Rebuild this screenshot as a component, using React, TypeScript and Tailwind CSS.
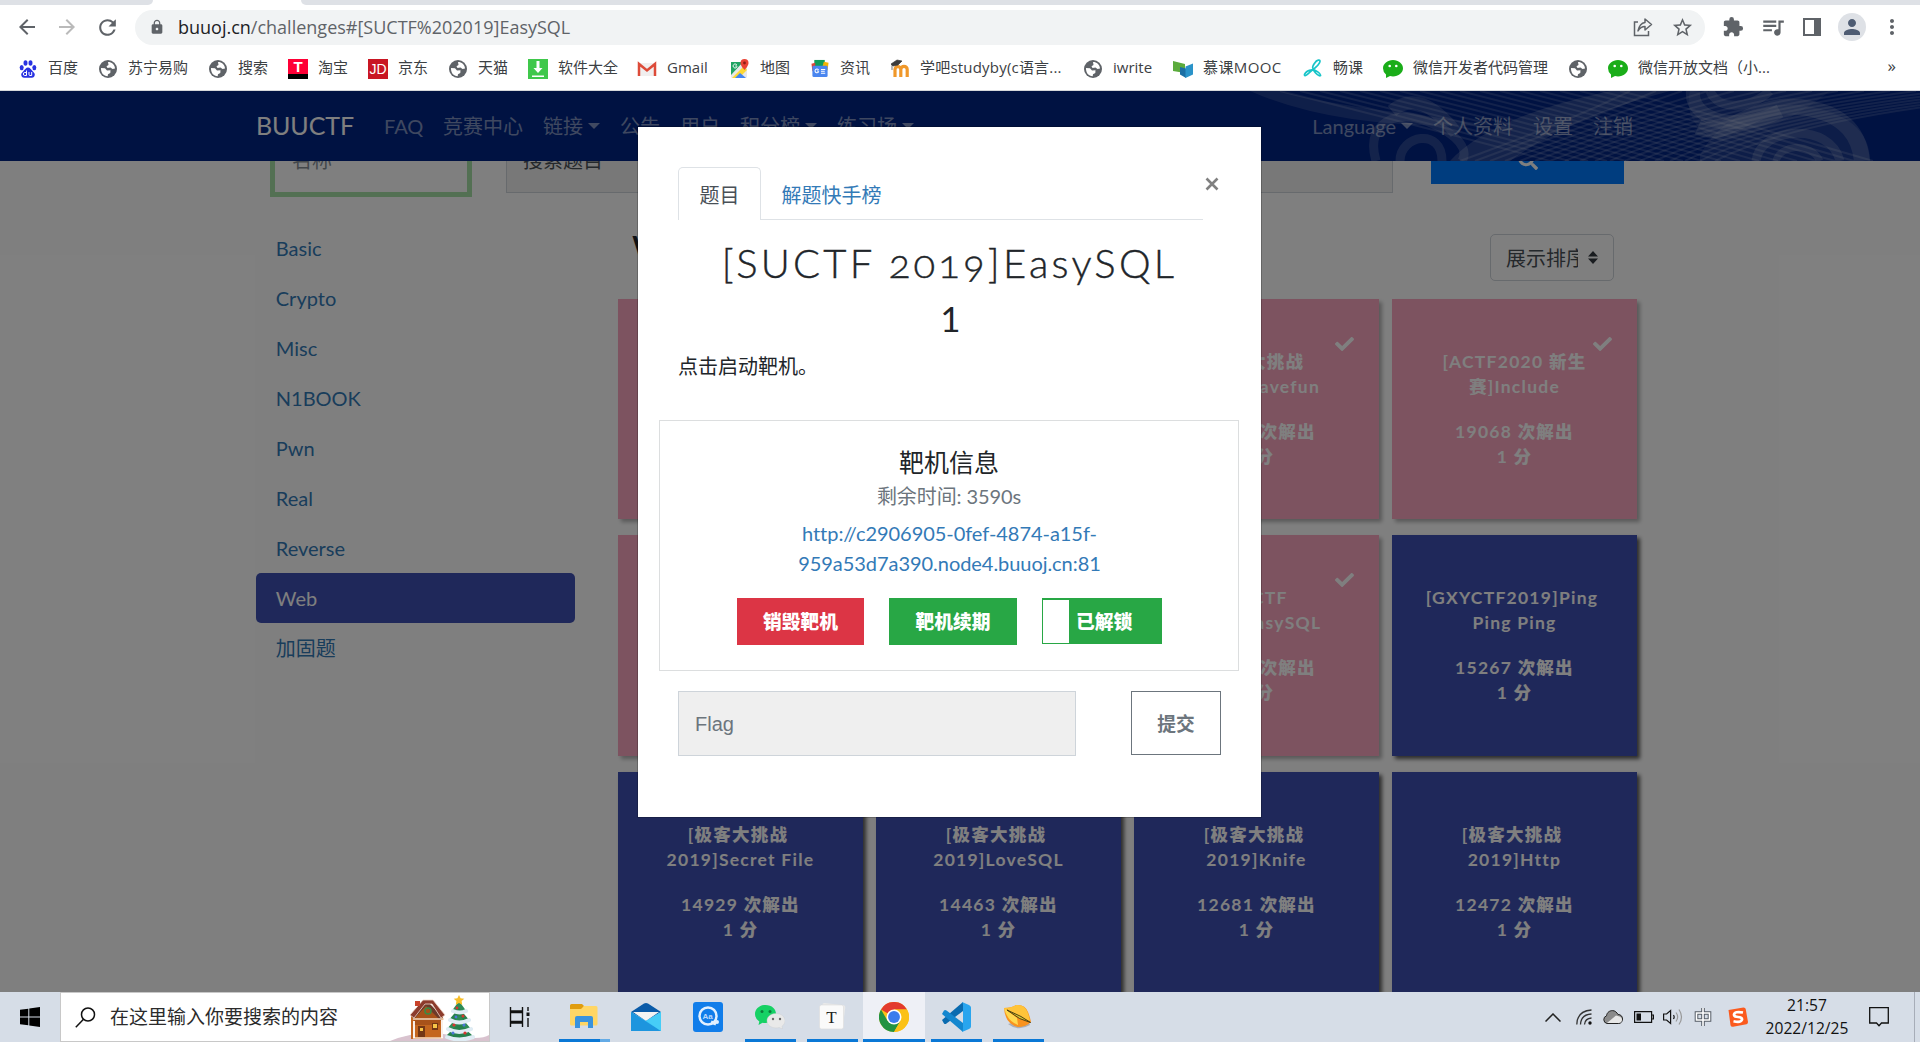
import React from "react";
import { FaCheck, FaSearch } from "react-icons/fa";
import {
  MdArrowBack,
  MdArrowForward,
  MdRefresh,
  MdStarOutline,
  MdPerson,
  MdMoreVert,
  MdQueueMusic,
  MdExtension,
  MdLock,
} from "react-icons/md";

const CJK = "font-[Lato,'Noto_Sans_CJK_SC',sans-serif]";
const UI = "font-['Open_Sans','Noto_Sans_CJK_SC',sans-serif]";

/* ---------- bookmark icons ---------- */

function Globe() {
  return (
    <svg viewBox="0 0 18 18" className="h-[18px] w-[18px]">
      <circle cx="9" cy="9" r="9" fill="#5f6368" />
      <path d="M2 8 6 8.200 8 10.500 11.500 10.300 11.300 13 9 14.200 8.700 16.300C4.500 16 1.800 13 2 8Z" fill="#fff" />
      <path d="M9 2.100C12.500 2 15.800 4.500 16 8.500L13.500 9 11.500 7.500 8.500 8 7.500 6.200 9.500 5Z" fill="#fff" />
    </svg>
  );
}

function Baidu() {
  return (
    <svg viewBox="0 0 18 18" className="h-[18px] w-[18px]" fill="#2932e1">
      <ellipse cx="2.700" cy="7.600" rx="2" ry="2.700" />
      <ellipse cx="6.500" cy="3" rx="2" ry="2.800" />
      <ellipse cx="11.500" cy="3" rx="2" ry="2.800" />
      <ellipse cx="15.300" cy="7.600" rx="2" ry="2.700" />
      <path d="M9 7.500c2 0 3 2 4.500 3.500S16.500 14 15.500 16s-3 2-6.500 1.700C5.500 18 3.500 18 2.500 16s.5-3.500 2-5S7 7.500 9 7.500Z" />
      <path d="M7.500 10.500v5H5.800a1.500 1.500 0 0 1 0-3h1.700M10 12v2.500q0 1 1 1h1.700V12" fill="none" stroke="#fff" strokeWidth="1" />
    </svg>
  );
}

function Download() {
  return (
    <svg viewBox="0 0 20 20" className="h-5 w-5">
      <rect width="20" height="20" fill="#3fc84b" />
      <path d="M8.500 2h3v7h3L10 14 5.500 9h3ZM4 16.500h12v1.500H4Z" fill="#fff" />
    </svg>
  );
}

function Gmail() {
  return (
    <svg viewBox="0 0 20 16" className="h-4 w-5">
      <path d="M1 2h18v13H1Z" fill="#f1efef" />
      <path d="M2 15V3l8 6.500L18 3v12" fill="none" stroke="#dd4b39" strokeWidth="2.500" />
    </svg>
  );
}

function MapsIcon() {
  return (
    <svg viewBox="0 0 20 20" className="h-5 w-5">
      <rect x="1" y="3" width="16" height="16" rx="1.500" fill="#e8e8e8" />
      <path d="M1 3h12L1 16Z" fill="#1fa463" />
      <path d="M2 19 14 7l3 4-8 8Z" fill="#fdd835" />
      <path d="m5 19 5-5 6 5Z" fill="#4285f4" />
      <path d="M14.500 0a4 4 0 0 1 4 4c0 3-4 7-4 7s-4-4-4-7a4 4 0 0 1 4-4Z" fill="#e94335" />
      <circle cx="14.500" cy="4" r="1.400" fill="#8c1d16" />
      <path d="M7 7H5.300M6.900 6a2 2 0 1 0 .2 1.500" stroke="#fff" fill="none" />
    </svg>
  );
}

function News() {
  return (
    <svg viewBox="0 0 20 20" className="h-[19px] w-5">
      <path d="M4 1h11v8H4Z" fill="#0f9d58" />
      <path d="m14 3 5 1-1 8-6-2Z" fill="#f4b400" />
      <path d="m1 5 4-1v9H2Z" fill="#db4437" />
      <rect x="2" y="7" width="16" height="12" rx="1.500" fill="#4a86f0" />
      <path d="M8.500 12.700H6.800M8.500 11.500a2 2 0 1 0 .2 1.500M11 11h4.500M11 13h4M11 15h4.500" stroke="#fff" strokeWidth="1.100" fill="none" />
    </svg>
  );
}

function Moodle() {
  return (
    <svg viewBox="0 0 20 20" className="h-5 w-5">
      <path d="M5 18V10.500a2.800 2.800 0 0 1 5.800 0V18M10.800 18v-7.500a3 3 0 0 1 6.400 0V18" fill="none" stroke="#f0982a" strokeWidth="3.200" />
      <path d="m1 5 6-4 5 1-4 4-5 1Zm1 0v6" fill="#3b3b3b" stroke="#3b3b3b" strokeWidth=".7" />
    </svg>
  );
}

function Mooc() {
  return (
    <svg viewBox="0 0 20 18" className="h-[18px] w-5">
      <path d="m0 1 12 3v9L0 11Z" fill="#5bab3c" />
      <path d="m7 7 6 1.500V18l-6-3.500Z" fill="#1b6fa4" />
      <path d="m12.500 6.500 7.500-3v11l-7.500 3.500Z" fill="#2a93c9" />
    </svg>
  );
}

function Changke() {
  return (
    <svg viewBox="0 0 20 20" className="h-[19px] w-5" fill="none" stroke="#18c5c9" strokeWidth="1.800" strokeLinejoin="round">
      <path d="M10 10C8.500 8 13 1.500 15.500 1.200S18 3 15.500 6 8 12.500 5 15.500s-4.500 2-3.800.5S5 12 9 11.500s9 4 9 5.500-3 .5-5.500-2.500S10.500 11 10 10Z" />
    </svg>
  );
}

function WeChatGreen() {
  return (
    <svg viewBox="0 0 20 18" className="h-[18px] w-5">
      <path d="M10 0c5.500 0 10 3.700 10 8.300s-4.500 8.200-10 8.200a12 12 0 0 1-3-.4L3 18v-3.500A8 8 0 0 1 0 8.300C0 3.700 4.500 0 10 0Z" fill="#1aad19" />
      <circle cx="6.700" cy="6" r="1.300" fill="#fff" />
      <circle cx="13.300" cy="6" r="1.300" fill="#fff" />
    </svg>
  );
}

const bookmarks: { icon: React.ReactNode; label: string; w: string; t?: string }[] = [
  { icon: <Baidu />, label: "百度", w: "w-[80px]" },
  { icon: <Globe />, label: "苏宁易购", w: "w-[110px]" },
  { icon: <Globe />, label: "搜索", w: "w-[80px]" },
  {
    icon: (
      <div className="flex h-5 w-5 flex-col items-center bg-[#ff0036] font-['Liberation_Sans',sans-serif] text-[15px] leading-[15px] font-bold text-white">
        <span className="h-[15px]">T</span>
        <span className="h-[5px] w-5 bg-black" />
      </div>
    ),
    label: "淘宝",
    w: "w-[80px]",
  },
  {
    icon: (
      <div className="flex h-5 w-5 items-center justify-center bg-[#c91623] font-['Liberation_Sans',sans-serif] text-[14px] leading-none text-white">
        JD
      </div>
    ),
    label: "京东",
    w: "w-[80px]",
  },
  { icon: <Globe />, label: "天猫", w: "w-[80px]" },
  { icon: <Download />, label: "软件大全", w: "w-[109px]" },
  { icon: <Gmail />, label: "Gmail", w: "w-[93px]" },
  { icon: <MapsIcon />, label: "地图", w: "w-[80px]" },
  { icon: <News />, label: "资讯", w: "w-[80px]" },
  { icon: <Moodle />, label: "学吧studyby(c语言...", w: "w-[193px]", t: "tracking-[0.2px]" },
  { icon: <Globe />, label: "iwrite", w: "w-[90px]" },
  { icon: <Mooc />, label: "慕课MOOC", w: "w-[130px]", t: "tracking-[0.4px]" },
  { icon: <Changke />, label: "畅课", w: "w-[80px]" },
  { icon: <WeChatGreen />, label: "微信开发者代码管理", w: "w-[185px]" },
  { icon: <Globe />, label: "", w: "w-[40px]" },
  { icon: <WeChatGreen />, label: "微信开放文档（小...", w: "w-[200px]" },
];

function Browser() {
  return (
    <div className={`flex h-[91px] shrink-0 flex-col border-b border-[#d5d7da] bg-white ${UI}`}>
      <div className="flex h-[5px] justify-between">
        <div className="w-[153px] rounded-br-[5px] bg-[#dee1e6]" />
        <div className="w-[1619px] rounded-bl-[5px] bg-[#dee1e6]" />
      </div>
      <div className="flex h-[44px] items-center text-[#5f6368]">
        <div className="flex w-[135px] items-center pl-[15px]">
          <MdArrowBack className="h-6 w-6" />
          <MdArrowForward className="ml-[16px] h-6 w-6 text-[#bababa]" />
          <MdRefresh className="ml-[16px] h-[25px] w-[25px]" />
        </div>
        <div className="flex h-[35px] w-[1570px] items-center rounded-full bg-[#f1f3f4] pr-[11px] pl-[14px]">
          <MdLock className="h-4 w-4" />
          <span className="ml-[13px] text-[18px] leading-none whitespace-nowrap">
            <span className="text-[#202124]">buuoj.cn</span>/challenges#[SUCTF%202019]EasySQL
          </span>
          <svg viewBox="0 0 20 20" className="ml-auto h-5 w-5" fill="none" stroke="#5f6368" strokeWidth="1.500">
            <path d="M5 5H1.500v13.500h14V14" />
            <path d="M12 2v3.500C8 6 6 9 5 14c2-3.500 4-4.500 7-4.500V13l6.500-5.500Z" strokeLinejoin="round" />
          </svg>
          <MdStarOutline className="ml-[18px] h-[23px] w-[23px]" />
        </div>
        <MdExtension className="ml-[17px] h-[22px] w-[22px]" />
        <MdQueueMusic className="ml-[16px] h-[26px] w-[26px]" />
        <svg viewBox="0 0 18 18" className="ml-[17px] h-[18px] w-[18px]">
          <path d="M1 1h16v16H1Z" fill="none" stroke="#5f6368" strokeWidth="2" />
          <path d="M11 1h6v16h-6Z" fill="#5f6368" />
        </svg>
        <div className="ml-[17px] flex h-7 w-7 items-center justify-center rounded-full bg-[#dee1e6] text-[#4e5c73]">
          <MdPerson className="h-6 w-6" />
        </div>
        <MdMoreVert className="ml-[14px] h-6 w-6" />
      </div>
      <div className="flex h-[40px] items-center pb-[1px] pl-[18px] text-[15px] leading-none text-[#3c4043]">
        {bookmarks.map((b, i) => (
          <div key={i} className={`flex shrink-0 items-center gap-[10px] ${b.w}`}>
            <span className="flex w-5 shrink-0 justify-center">{b.icon}</span>
            <span className={`pb-[2px] whitespace-nowrap ${b.t ?? ""}`}>{b.label}</span>
          </div>
        ))}
        <span className="ml-auto pr-[24px] pb-[6px] text-[17px]">»</span>
      </div>
    </div>
  );
}

/* ---------- site ---------- */

function Caret() {
  return <span className="ml-[5px] h-0 w-0 border-x-[6px] border-t-[6px] border-x-transparent border-t-current" />;
}

function NavArt() {
  const fan = Array.from({ length: 18 }, (_, i) => i);
  return (
    <svg viewBox="0 0 700 70" className="absolute top-0 right-0 h-[70px] w-[700px]" fill="none" stroke="#fff">
      <g strokeOpacity=".15" strokeWidth="2">
        {fan.map((i) => (
          <path key={i} d={`M${60 + i * 20} 0Q${220 + i * 16} ${40 - i} ${330 + i * 19} 70`} />
        ))}
        {fan.map((i) => (
          <path key={i} d={`M${240 + i * 15} 70Q${350 + i * 14} ${30 - i * 0.5} ${410 + i * 26} 0`} />
        ))}
      </g>
      <path d="M30 0Q120 40 270 34L200 24Q110 14 60 0Z" fill="#fff" fillOpacity=".12" stroke="none" />
      <path d="M230 70Q270 26 390 0H450Q350 26 290 70Z" fill="#fff" fillOpacity=".16" stroke="none" />
      <path d="M470 0H610Q560 40 500 50Q462 34 470 0Z" fill="#fff" fillOpacity=".08" stroke="none" />
      <path d="M480 64Q510 10 580 14Q650 24 650 70H480Z" fill="#fff" fillOpacity=".1" stroke="none" />
      <g strokeOpacity=".16" strokeWidth="9">
        <path d="M156 70C146 36 170 24 190 26S254 50 242 70" />
        <path d="M180 70C180 44 222 36 222 70" />
        <path d="M172 20Q200 -4 236 42" strokeWidth="13" />
        <path d="M473 0C470 30 520 42 560 20" strokeWidth="14" />
        <path d="M490 0C498 20 530 18 550 0" />
        <path d="M478 36C510 50 530 10 580 16S640 50 642 70" strokeWidth="16" />
        <path d="M536 70C540 36 610 30 620 70" />
        <path d="M556 70C560 54 590 50 600 70" strokeWidth="7" />
      </g>
    </svg>
  );
}

function Nav() {
  return (
    <nav className="relative flex h-[70px] shrink-0 bg-[#002484] pl-[256px] text-[20px] text-white/50">
      <NavArt />
      <div className="relative flex h-full w-[1377px] items-center justify-between">
        <div className="flex items-center gap-5">
          <span className="mr-[10px] w-[98px] text-[25px] tracking-[-0.1px] text-white">BUUCTF</span>
          <span className="w-[39px]">FAQ</span>
          <span>竞赛中心</span>
          <span className="flex items-center">链接<Caret /></span>
          <span>公告</span>
          <span>用户</span>
          <span className="flex items-center">积分榜<Caret /></span>
          <span className="flex items-center">练习场<Caret /></span>
        </div>
        <div className="flex items-center gap-5">
          <span className="flex items-center">Language<Caret /></span>
          <span>个人资料</span>
          <span>设置</span>
          <span>注销</span>
        </div>
      </div>
    </nav>
  );
}

type Chal = { title: string[]; count: string; solved?: boolean };
const cards: Chal[] = [
  { title: [], count: "", solved: true },
  { title: [], count: "", solved: true },
  { title: ["[极客大挑战", "2019]Havefun"], count: "20000", solved: true },
  { title: ["[ACTF2020 新生", "赛]Include"], count: "19068", solved: true },
  { title: [], count: "", solved: true },
  { title: [], count: "", solved: true },
  { title: ["[SUCTF", "2019]EasySQL"], count: "16000", solved: true },
  { title: ["[GXYCTF2019]Ping", "Ping Ping"], count: "15267" },
  { title: ["[极客大挑战", "2019]Secret File"], count: "14929" },
  { title: ["[极客大挑战", "2019]LoveSQL"], count: "14463" },
  { title: ["[极客大挑战", "2019]Knife"], count: "12681" },
  { title: ["[极客大挑战", "2019]Http"], count: "12472" },
];

/* Draws Han characters one weight heavier than the Latin letters around them. */
function Mixed({ text }: { text: string }) {
  return (
    <>
      {text.split(/([\u4e00-\u9fff]+)/).map((part, i) =>
        i % 2 ? (
          <span key={i} className="font-black">{part}</span>
        ) : (
          part
        ),
      )}
    </>
  );
}

function Card({ c }: { c: Chal }) {
  return (
    <div
      className={`relative flex h-[220.5px] flex-col items-center pt-[50px] text-[17.5px] leading-[25px] font-bold tracking-[1.25px] text-white ${
        c.solved ? "bg-[#faa6c0] shadow-[3px_3px_4px_rgba(0,0,0,0.3)]" : "bg-[#3f51b4] shadow-[3px_3px_4px_rgba(0,0,0,0.65)]"
      }`}
    >
      {c.title.map((t, i) => (
        <span key={t} className={`h-[25px] whitespace-pre ${i === 0 && !t.includes(" ") ? "pr-[5px]" : ""}`}>
          <Mixed text={t} />
        </span>
      ))}
      {c.count && (
        <>
          <span className="mt-5 h-[25px] whitespace-pre"><Mixed text={`${c.count} 次解出`} /></span>
          <span className="h-[25px] whitespace-pre"><Mixed text="1 分" /></span>
        </>
      )}
      {c.solved && c.count && <FaCheck className="absolute top-[35px] right-[25px] h-[20px] w-[19px]" />}
    </div>
  );
}

const categories = ["Basic", "Crypto", "Misc", "N1BOOK", "Pwn", "Real", "Reverse", "Web", "加固题"];

function Site() {
  return (
    <div className="flex flex-col bg-white">
      <Nav />
      <div className="flex h-[62px] items-start pl-[270px] text-[20px] leading-none">
        <div className="flex h-[36px] w-[202px] border-[5px] border-t-0 border-[#a6e0a6] pl-[17px] text-[#868e96] [clip-path:inset(0)]">
          <span className="-mt-[11px]">名称</span>
        </div>
        <div className="ml-[34px] flex h-[32px] w-[887px] border border-t-0 border-[#ced4da] bg-[#f0f0f0] pl-[16px] text-[#495057] [clip-path:inset(0)]">
          <span className="-mt-[11px]">搜索题目</span>
        </div>
        <div className="ml-[38px] flex h-[23px] w-[193px] justify-center overflow-hidden bg-[#007bff] text-white">
          <FaSearch className="-mt-[11px] h-[20px] w-[20px] shrink-0" />
        </div>
      </div>
      <div className="flex pl-[256px]">
        <div className="flex w-[319px] flex-col text-[20px]">
          {categories.map((c) => (
            <div
              key={c}
              className={`flex h-[50px] items-center rounded-[5px] pl-[19.8px] ${
                c === "Web" ? "bg-[#3f51b4] text-white" : "text-[#337ab7]"
              }`}
            >
              {c}
            </div>
          ))}
        </div>
        <div className="ml-[43px] w-[1019px]">
          <div className="flex h-[75.6px] justify-between pt-[11px]">
            <h3 className="-mt-[4px] pl-[14px] text-[35px] leading-none font-medium text-[#212529]">Web</h3>
            <div className="mr-[23px] flex h-[47px] w-[124px] items-center rounded-[5px] border border-[#ced4da] pt-px pl-[15px] text-[20px] text-[#495057]">
              <span className="w-[72px] overflow-hidden whitespace-nowrap">展示排序</span>
              <svg viewBox="0 0 10 13" className="mb-px ml-[10px] h-[13px] w-[10px]" fill="#343a40">
                <path d="M5 0 10 5.500H0ZM5 13 0 7.500h10Z" />
              </svg>
            </div>
          </div>
          <div className="grid grid-cols-4 gap-x-[13px] gap-y-[16.2px]">
            {cards.map((c, i) => (
              <Card key={i} c={c} />
            ))}
          </div>
        </div>
      </div>
    </div>
  );
}

function Modal() {
  return (
    <div className="absolute top-[36px] left-[638px] flex h-[690px] w-[623px] flex-col bg-white px-[40px] pt-[40px] text-[20px] text-[#212529] shadow-[0_0_0_1px_rgba(0,0,0,0.2)]">
      <div className="flex h-[53px]">
        <div className="flex w-[525px] border-b border-[#dee2e6]">
          <div className="-mb-px flex w-[83px] items-center justify-center rounded-t-[5px] border border-b-0 border-[#dee2e6] bg-white pt-[2px] text-[#495057]">
            题目
          </div>
          <div className="pt-[13px] pl-[20.6px] text-[#337ab7]">解题快手榜</div>
        </div>
        <div className="flex h-[34px] w-[17px] items-center justify-center">
          <svg viewBox="0 0 14 14" className="h-[14px] w-[14px] shrink-0">
            <path d="M1.500 1.500 12.500 12.500M12.500 1.500 1.500 12.500" stroke="#808080" strokeWidth="2.600" />
          </svg>
        </div>
      </div>
      <h2 className="mt-[19px] flex h-[48px] justify-center text-[40px] leading-[48px] font-light tracking-[3.2px] whitespace-nowrap [-webkit-text-stroke:0.4px_#212529] [font-feature-settings:'onum']">
        [SUCTF 2019]EasySQL
      </h2>
      <h3 className="mt-[10px] pl-[2px] text-center text-[35px] leading-[42px]">1</h3>
      <p className="mt-[12px] h-[30px] leading-[30px]">点击启动靶机。</p>
      <div className="mt-[39px] -ml-[19px] flex h-[251px] w-[580px] shrink-0 flex-col items-center border border-[#dcdedf] pt-[26px]">
        <div className="text-[25px] leading-[30px]">靶机信息</div>
        <div className="mt-[4px] leading-[30px] tracking-[-0.1px] text-[#6c757d]">剩余时间: 3590s</div>
        <div className="mt-[7px] pl-px text-center leading-[30px] tracking-[-0.05px] text-[#337ab7]">
          http://c2906905-0fef-4874-a15f-
          <br />
          959a53d7a390.node4.buuoj.cn:81
        </div>
        <div className="mt-[20px] flex h-[47px] gap-[25px] self-start pl-[77px] text-[18.75px] font-black text-white">
          <div className="flex w-[127px] items-center justify-center bg-[#dc3545] pt-px">销毁靶机</div>
          <div className="flex w-[128px] items-center justify-center bg-[#28a745] pt-px">靶机续期</div>
          <div className="flex h-[46px] w-[120px] items-center bg-[#28a745] py-[2px] pl-px">
            <span className="h-[43px] w-[26px] bg-white" />
            <span className="pt-[2px] pl-[7px]">已解锁</span>
          </div>
        </div>
      </div>
      <div className="mt-[20px] flex">
        <div className="flex h-[65px] w-[398px] items-center border border-[#ced4da] bg-[#efefef] pl-[16px] font-['Liberation_Sans',sans-serif] text-[#6c757d]">
          Flag
        </div>
        <div className="ml-[55px] flex h-[64px] w-[90px] items-center justify-center border border-[#6c757d] pt-[2px] text-[18.75px] font-bold text-[#6c757d]">
          提交
        </div>
      </div>
    </div>
  );
}

/* ---------- taskbar ---------- */

function Festive() {
  return (
    <svg viewBox="0 0 99 48" className="ml-auto h-[48px] w-[99px]">
      <path d="M0 48Q30 36 60 42T99 42V48Z" fill="#d9c3cf" />
      <path d="M21 22 53 20 53 45 21 46Z" fill="#c4661f" />
      <path d="M21 22 37 8 53 24 50 28 36 14 24 27Z" fill="#6d3a2a" />
      <path d="M24 26 36 13 50 27V32H24Z" fill="#a8521a" />
      <path d="M20 22 33 7H43L55 22 51 25 42 11H35L24 25Z" fill="#8c3b2c" stroke="#f0d6c8" strokeWidth=".8" />
      <path d="M25 7h5v6h-5Z" fill="#c9432b" />
      <path d="M25 6h5v2h-5Z" fill="#fff" />
      <path d="M23 26H54M23 45H53" stroke="#f3d9bf" strokeWidth="1.500" />
      <path d="M28 33h7v11h-7ZM42 30h6v7h-6Z" fill="#733715" />
      <path d="M30 35h3v3h-3ZM43 31h4v4h-4Z" fill="#f7c548" />
      <path d="M24 28v17M52 27v18" stroke="#fff" strokeWidth="1.800" />
      <circle cx="38" cy="18" r="3" fill="none" stroke="#3c8b45" strokeWidth="1.600" />
      <path d="M69 8 77 19H61Z" fill="#2e8b57" />
      <path d="M69 15 80 28H58Z" fill="#26804d" />
      <path d="M69 22 82 37H56Z" fill="#2e8b57" />
      <path d="M69 30 84 44q-15 4-29 0Z" fill="#26804d" />
      <path d="M63 18q7 3 13 0M60 27q9 5 19 0M58 36q11 6 23 0M57 44q12 5 26 0" stroke="#dfecf4" strokeWidth="4" fill="none" strokeLinecap="round" />
      <path d="m69 2 1.600 3.300 3.700.4-2.700 2.400.6 3.600L69 9.900 65.800 11.700l.6-3.600-2.700-2.400 3.700-.4Z" fill="#f8be28" />
      <g fill="#d8352f">
        <circle cx="67" cy="15" r="1.400" />
        <circle cx="73" cy="23" r="1.500" />
        <circle cx="64" cy="32" r="1.600" />
        <circle cx="75" cy="40" r="1.600" />
      </g>
      <g fill="#4b75d8">
        <circle cx="66" cy="24" r="1.400" />
        <circle cx="74" cy="32" r="1.500" />
        <circle cx="63" cy="40" r="1.500" />
      </g>
    </svg>
  );
}

function Explorer() {
  return (
    <svg viewBox="0 0 28 24" className="h-6 w-7">
      <path d="M0 1.500Q0 0 1.500 0H12l2 2-2 4H0Z" fill="#e09d10" />
      <path d="M0 5h11l3-3h12q1.500 0 1.500 1.500V20q0 1.500-1.500 1.500H1.500Q0 21.500 0 20Z" fill="#ffd665" />
      <path d="M5 24V14q0-2 2-2h14q2 0 2 2v10h-5v-6h-8v6Z" fill="#3a93dd" />
    </svg>
  );
}
function Mail() {
  return (
    <svg viewBox="0 0 30 28" className="h-7 w-[30px]">
      <path d="M0 9 13 .6q2-1 4 0L30 9l-15 9Z" fill="#0a5aa8" />
      <path d="M2 9h26L15 18Z" fill="#f3f3f3" />
      <path d="M0 9 15 18 30 9V28H0Z" fill="#28b5ef" />
      <path d="M0 9 30 28H0Z" fill="#1d95de" />
      <path d="M30 9v19L15 18Z" fill="#46cdf7" />
    </svg>
  );
}
function Dict() {
  return (
    <svg viewBox="0 0 30 30" className="h-[30px] w-[30px]">
      <rect width="30" height="30" rx="3" fill="#117dea" />
      <circle cx="15" cy="14" r="8.500" fill="none" stroke="#e2f0ff" strokeWidth="2.500" />
      <circle cx="24" cy="20" r="2" fill="#e2f0ff" />
      <path d="m18 20 5 2" stroke="#e2f0ff" strokeWidth="3" />
      <text x="14.500" y="17" fontSize="8" fontWeight="700" textAnchor="middle" fill="#bcd9fa" fontFamily="Liberation Sans">Aa</text>
    </svg>
  );
}
function WeChatTask() {
  return (
    <svg viewBox="0 0 30 24" className="h-6 w-[30px]">
      <path d="M10.500 0C17 0 21 4 21 9s-4 9-10.500 9a14 14 0 0 1-3-.3L3.500 20l.8-3.500A9 9 0 0 1 0 9c0-5 4.500-9 10.500-9Z" fill="#16d165" />
      <circle cx="7" cy="6.500" r="1.500" fill="#0b7d3b" />
      <circle cx="15" cy="6.500" r="1.500" fill="#0b7d3b" />
      <path d="M21 8.500c5.500 0 9 3.400 9 7.200 0 2.400-1.300 4.300-3 5.600l.6 2.700-3.300-1.500a12 12 0 0 1-3.300.4c-5 0-9-3-9-7.200s4-7.200 9-7.200Z" fill="#e9e9e9" stroke="#c9ccd0" strokeWidth=".4" />
      <circle cx="18" cy="14" r="1.200" fill="#6b6b6b" />
      <circle cx="25" cy="14" r="1.200" fill="#6b6b6b" />
    </svg>
  );
}
function Typora() {
  return (
    <svg viewBox="0 0 28 28" className="h-7 w-7">
      <rect x="3" y="1" width="23" height="24" rx="2" fill="#e9e9e9" transform="rotate(7 14 14)" />
      <rect x="1.500" y="2" width="24" height="24" rx="2" fill="#fafafa" stroke="#dcdcdc" strokeWidth=".6" />
      <text x="13.500" y="20" fontSize="17" textAnchor="middle" fill="#222" fontFamily="Liberation Serif">T</text>
    </svg>
  );
}
function Chrome() {
  return (
    <svg viewBox="0 0 48 48" className="h-[30px] w-[30px]">
      <circle cx="24" cy="24" r="24" fill="#fbc116" />
      <path d="M24 24 3.200 12A24 24 0 0 1 44.800 12H24Z" fill="#e33b2e" />
      <path d="M3.200 12A24 24 0 0 0 24 48L34.400 30 24 24 13.600 30Z" fill="#229342" />
      <path d="M24 12H44.800A24 24 0 0 1 24 48L34.400 30Z" fill="#fbc116" />
      <circle cx="24" cy="24" r="12" fill="#fff" />
      <circle cx="24" cy="24" r="9.500" fill="#3b7ded" />
    </svg>
  );
}
function VSCode() {
  return (
    <svg viewBox="0 0 30 30" className="h-[30px] w-[30px]">
      <path d="M1 18 3 21.500q1 1 2.500 0L22 9V0Z" fill="#0a6bb0" />
      <path d="M1 12 3 8.500q1-1 2.500 0L22 21v9Z" fill="#1487cf" />
      <path d="M21 0 28 3q2 1 2 2.500v19q0 1.500-2 2.500l-7 3q1-1 1-3V3q0-2-1-3Z" fill="#29a5ee" />
    </svg>
  );
}
function Leaf() {
  return (
    <svg viewBox="0 0 30 26" className="h-[26px] w-[30px]">
      <path d="M5 20Q15 28 27 21L24 15Z" fill="#8c8f97" fillOpacity=".6" />
      <path d="M1 4Q9 4 13 1q9-1 12 7 2 5 3 10-5 5-13 5Q2 20 1 4Z" fill="#f9931f" />
      <path d="M1 4Q9 4 13 1q8-1 11 6 2 4 3 10L12 11Z" fill="#ffc43a" />
      <path d="M1 4q3 13 14 17l-1-7Z" fill="#ffd94f" />
      <path d="m4 6 14 6.500 9.500 6-11-4Z" fill="#d9c535" stroke="#3d3510" strokeWidth=".9" />
    </svg>
  );
}

const apps: { icon: React.ReactNode; active?: boolean; open?: boolean }[] = [
  { icon: <Mail /> },
  { icon: <Dict /> },
  { icon: <WeChatTask />, open: true },
  { icon: <Typora />, open: true },
  { icon: <Chrome />, active: true },
  { icon: <VSCode />, open: true },
  { icon: <Leaf />, open: true },
];

function Taskbar() {
  return (
    <div className={`flex h-[50px] shrink-0 items-center bg-[#d6dde7] ${UI}`}>
      <div className="flex w-[60px] justify-center">
        <svg viewBox="0 0 20 20" className="h-5 w-5">
          <path d="M0 2.800 8.300 1.700V9.500H0ZM9.300 1.500 20 0V9.500H9.300ZM0 10.500H8.300V18.300L0 17.200ZM9.300 10.500H20V20L9.300 18.500Z" />
        </svg>
      </div>
      <div className="flex h-[50px] w-[430px] items-center overflow-hidden border border-[#c8c8c8] bg-white">
        <svg viewBox="0 0 21 21" className="ml-[14px] h-[21px] w-[21px] shrink-0" fill="none" stroke="#111" strokeWidth="1.500">
          <circle cx="13" cy="7.500" r="6.500" />
          <path d="M8.500 12.300.8 20.300" />
        </svg>
        <span className="ml-[14px] text-[19px] leading-none whitespace-nowrap text-[#2b2b2b]">在这里输入你要搜索的内容</span>
        <Festive />
      </div>
      <div className="flex w-[69px] justify-center pr-[9px]">
        <svg viewBox="0 0 22 22" className="h-[22px] w-[22px]" fill="none" stroke="#111" strokeWidth="1.400">
          <path d="M1.500 1v4h12V1M1.500 6.500h12v9h-12ZM1.500 21v-4h12v4M19 1v4M19 12v9" />
          <path d="M17.500 6.500h3v3.500h-3Z" fill="#111" stroke="none" />
        </svg>
      </div>
      <div className="flex h-full w-[51px] flex-col items-center">
        <div className="flex h-[47px] w-full items-center justify-center pr-[2px]"><Explorer /></div>
        <div className="flex h-[3px] w-full">
          <span className="w-[41px] bg-[#0a78d6]" />
          <span className="w-[10px] bg-[#64abe6]" />
        </div>
      </div>
      <div className="ml-[5px] flex h-full">
        {apps.map((a, i) => (
          <div key={i} className={`flex h-full w-[62px] flex-col items-center ${a.active ? "bg-[#eef0f6]" : ""}`}>
            <div className="flex h-[47px] items-center pt-[2px]">{a.icon}</div>
            <div className={`h-[3px] ${a.active ? "w-full bg-[#0a78d6]" : a.open ? "w-[51px] bg-[#0a78d6]" : ""}`} />
          </div>
        ))}
      </div>
      <div className="ml-auto flex h-full items-center border-r border-[#a7adb8] pr-[25px]">
        <svg viewBox="0 0 16 9" className="h-[9px] w-4" fill="none" stroke="#222" strokeWidth="1.500"><path d="m.5 8.500 7.500-7.500 7.500 7.500" /></svg>
        <svg viewBox="0 0 16 16" className="ml-[15px] h-4 w-4" fill="none" stroke="#333" strokeWidth="1.300">
          <path d="M.8 15.500Q1 2 15.500 1M4.500 15.500Q5 5.500 15.500 5M8.500 15.500q.5-6 7-6.500" />
          <circle cx="14" cy="14" r="1.700" fill="#111" stroke="none" />
        </svg>
        <svg viewBox="0 0 20 14" className="ml-[11px] h-[14px] w-5">
          <path d="M4 13.500a4 4 0 0 1-.5-7.700C4 2 7 .6 9.500.6S14 2.500 15 4.500c3 0 4.500 2 4.500 4.500s-1.500 4.500-4 4.500Z" fill="#8b8b8b" stroke="#222" />
          <path d="M4 13 13 5.500q6 1 6 4T16 13Z" fill="#e7e7e7" />
        </svg>
        <svg viewBox="0 0 20 12" className="ml-[11px] h-3 w-5" fill="none" stroke="#111" strokeWidth="1.200">
          <path d="M.6.6h17v10.800H.6ZM18 4h1.400v4H18" />
          <path d="M2.500 2.500h4.500v7H2.500Z" fill="#111" stroke="none" />
        </svg>
        <svg viewBox="0 0 20 18" className="ml-[9px] h-[18px] w-5" fill="none" stroke="#111" strokeWidth="1.200">
          <path d="M.6 6v6h3l4 3.500v-13L3.600 6Z" />
          <path d="M10.500 7q1.300 2 0 4" />
          <path d="M13 4.500q3.300 4.500 0 9M16 1.500q5 7.500 0 15" stroke="#999" />
        </svg>
        <svg viewBox="0 0 18 20" className="ml-[11px] h-5 w-[18px]" fill="none">
          <path d="M2.500 6h13v7h-13ZM9 1v18" stroke="#555c66" strokeWidth="3.600" />
          <path d="M2.500 6h13v7h-13ZM9 1v18" stroke="#fff" strokeWidth="1.600" />
        </svg>
        <svg viewBox="0 0 20 20" className="ml-[16px] h-5 w-5">
          <path d="m.5 3 15-2.500q2 0 2.200 1.500L20 15q0 2-1.500 2.300L5 19.700q-2 .2-2.500-1.500Z" fill="#fb5a1e" />
          <path d="M15 5.500Q6.500 4 6 7.500q0 2.300 4 2.500 4.500.2 4 2.700Q13 16 5.500 14.200" fill="none" stroke="#fff" strokeWidth="2.700" />
        </svg>
        <div className="ml-[17px] flex w-[84px] flex-col items-center text-[15.6px] leading-[23px] whitespace-nowrap text-[#111]">
          <span>21:57</span>
          <span>2022/12/25</span>
        </div>
        <svg viewBox="0 0 20 20" className="ml-[20px] h-5 w-5" fill="none" stroke="#111" strokeWidth="1.300">
          <path d="M.7.700h18.600v15.300H12.500L10 18.800 7.500 16H.7Z" />
        </svg>
      </div>
      <div className="w-[5px]" />
    </div>
  );
}

export default function App() {
  return (
    <div className="flex h-[1042px] w-[1920px] flex-col overflow-hidden">
      <Browser />
      <div className={`relative h-[901px] overflow-hidden ${CJK}`}>
        <Site />
        <div className="absolute inset-0 bg-black/50" />
        <Modal />
      </div>
      <Taskbar />
    </div>
  );
}
